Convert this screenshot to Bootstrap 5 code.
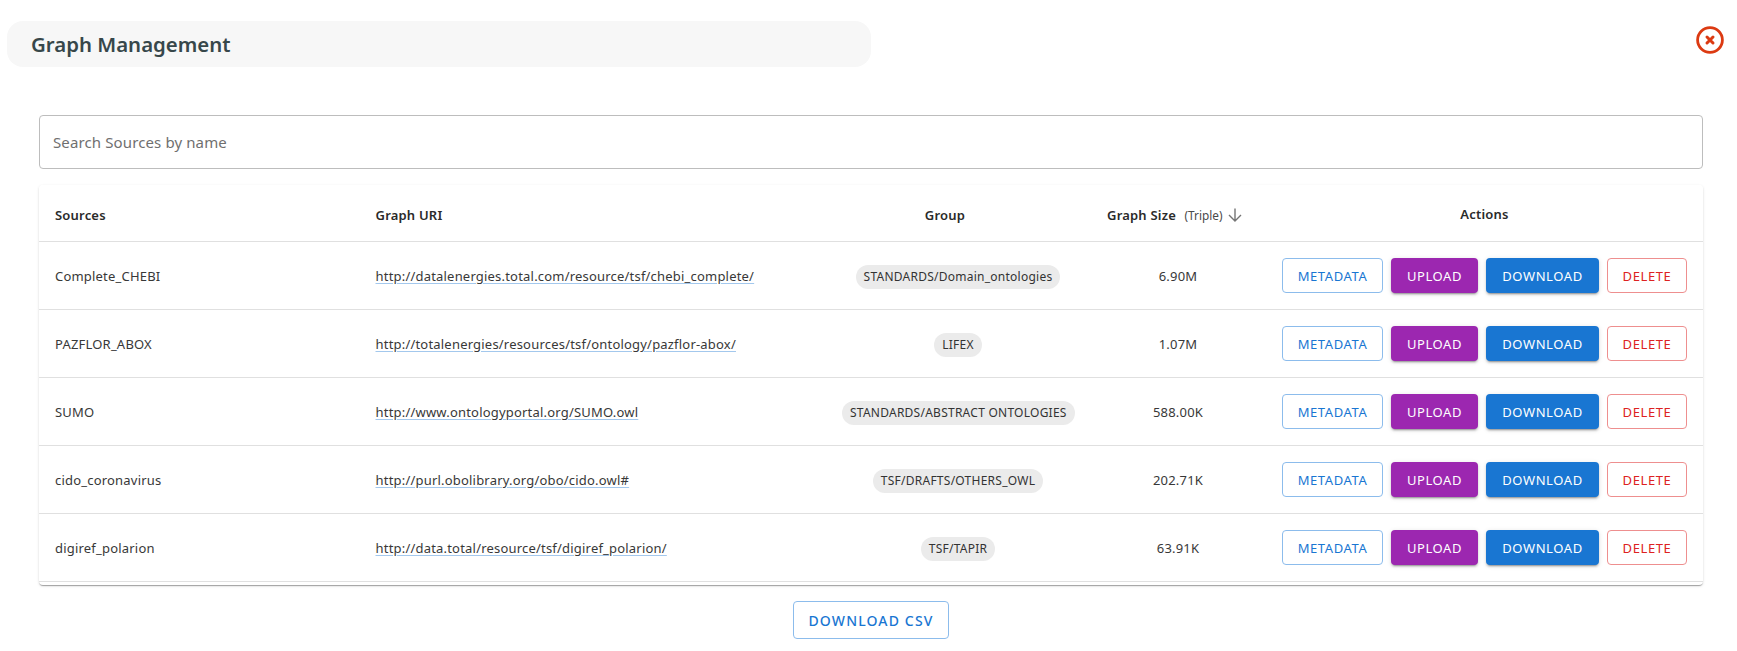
<!DOCTYPE html>
<html lang="en">
<head>
<meta charset="utf-8">
<title>Graph Management</title>
<link href="https://cdn.jsdelivr.net/npm/bootstrap@5.3.0/dist/css/bootstrap.min.css" rel="stylesheet">
<style>
html,body{background:#fff;font-family:"Noto Sans",sans-serif;color:#383838;}
.gm-page{height:651px;overflow:hidden;padding:21px 13px 0 7px;}
.gm-head{height:46px;}
.gm-title{width:864px;height:46px;background:#f7f7f7;border-radius:16px;padding:0 0 0 24px;font-size:20.4px;font-weight:600;color:#37474a;margin:0;line-height:46px;}
.gm-close{margin-top:5px;}
.gm-body{padding:48px 21px 0 32px;}
.gm-search{height:54px;border:1px solid #bdbdbd;border-radius:4px;padding:0 13px;font-size:15px;letter-spacing:.12px;color:#333;box-shadow:none;}
.gm-search::placeholder{color:#6f6f6f;opacity:1;}
.gm-card{margin-top:16px;border-radius:4px;box-shadow:0 2px 1px -1px rgba(0,0,0,.2),0 1px 1px 0 rgba(0,0,0,.14),0 1px 3px 0 rgba(0,0,0,.12);height:400px;overflow:hidden;}
.gm-table{table-layout:fixed;width:100%;margin:0;font-size:13px;letter-spacing:.2px;color:#383838;}
.gm-table th,.gm-table td{border-bottom:1px solid #e0e0e0;padding:0 16px;vertical-align:middle;background:#fff;color:#383838;}
.gm-table thead tr{height:56px;}
.gm-table tbody tr{height:68px;}
.gm-table th{font-weight:600;font-size:13px;color:#2a2a2a;padding-top:6px;}
.gm-table th.gm-actions{padding-top:4px;}
.gm-table th.gm-size{padding-left:17px;}
.gm-table td.gm-txt{padding-top:3px;}
.gm-table td.gm-chipcell{padding-left:42px;padding-right:16px;padding-top:3px;}
.gm-uri{color:#383838;text-decoration:underline;text-decoration-color:rgba(25,118,210,.4);text-underline-offset:2px;}
.gm-chip{display:inline-block;height:24px;line-height:24px;border-radius:12px;background:#ebebeb;padding:0 8px;font-size:12px;letter-spacing:.25px;color:#333;white-space:nowrap;}
.gm-triple{font-size:11.8px;font-weight:400;color:#4a4a4a;margin-left:5px;letter-spacing:0;}
.gm-arrow{margin-left:5px;vertical-align:-3px;}
.gm-btn{height:35px;font-size:13px;font-weight:400;line-height:1;letter-spacing:.6px;padding:2px 0 0;border-radius:4px;display:flex;align-items:center;justify-content:center;}
.gm-meta{width:101px;background:#fff;border:1px solid #8cbcec;color:#1976d2;}
.gm-up{width:87px;background:#9c27b0;border:0;color:#fff;box-shadow:0 3px 1px -2px rgba(0,0,0,.2),0 2px 2px 0 rgba(0,0,0,.14),0 1px 5px 0 rgba(0,0,0,.12);}
.gm-down{width:113px;background:#1976d2;border:0;color:#fff;box-shadow:0 3px 1px -2px rgba(0,0,0,.2),0 2px 2px 0 rgba(0,0,0,.14),0 1px 5px 0 rgba(0,0,0,.12);}
.gm-del{width:80px;background:#fff;border:1px solid #ee8f8f;color:#dd2222;}
.gm-csv{width:156px;height:38px;margin-top:16px;background:#fff;border:1px solid #8cbcec;color:#1976d2;font-size:14px;font-weight:500;letter-spacing:1.15px;border-radius:4px;padding:0;}
.gm-gap{gap:8px;}
</style>
</head>
<body>
<div class="gm-page">
  <div class="gm-head d-flex justify-content-between align-items-start">
    <h1 class="gm-title">Graph Management</h1>
    <svg class="gm-close" width="28" height="28" viewBox="0 0 28 28" aria-label="Close">
      <circle cx="14" cy="14" r="12.4" fill="none" stroke="#dc3a12" stroke-width="2.8"/>
      <path d="M11 11l6 6M17 11l-6 6" stroke="#dc3a12" stroke-width="3" stroke-linecap="round" fill="none"/>
    </svg>
  </div>
  <div class="gm-body">
    <input class="form-control gm-search" type="text" placeholder="Search Sources by name">
    <div class="gm-card bg-white">
      <table class="table gm-table">
        <colgroup><col style="width:320.5px"><col style="width:440.5px"><col style="width:290px"><col style="width:176px"><col></colgroup>
        <thead>
          <tr>
            <th>Sources</th>
            <th>Graph URI</th>
            <th class="text-center">Group</th>
            <th class="text-nowrap gm-size">Graph Size <span class="gm-triple">(Triple)</span><svg class="gm-arrow" width="16" height="16" viewBox="0 0 16 16"><path d="M8 1.5v12.5M2 8l6 6 6-6" fill="none" stroke="#757575" stroke-width="1.4"/></svg></th>
            <th class="text-center gm-actions">Actions</th>
          </tr>
        </thead>
        <tbody>
          <tr>
            <td class="gm-txt">Complete_CHEBI</td>
            <td class="gm-txt"><a class="gm-uri" href="#">http://datalenergies.total.com/resource/tsf/chebi_complete/</a></td>
            <td class="text-center gm-chipcell"><span class="gm-chip">STANDARDS/Domain_ontologies</span></td>
            <td class="text-center gm-txt">6.90M</td>
            <td><div class="d-flex justify-content-center gm-gap"><button class="btn gm-btn gm-meta">METADATA</button><button class="btn gm-btn gm-up">UPLOAD</button><button class="btn gm-btn gm-down">DOWNLOAD</button><button class="btn gm-btn gm-del">DELETE</button></div></td>
          </tr>
          <tr>
            <td class="gm-txt">PAZFLOR_ABOX</td>
            <td class="gm-txt"><a class="gm-uri" href="#">http://totalenergies/resources/tsf/ontology/pazflor-abox/</a></td>
            <td class="text-center gm-chipcell"><span class="gm-chip">LIFEX</span></td>
            <td class="text-center gm-txt">1.07M</td>
            <td><div class="d-flex justify-content-center gm-gap"><button class="btn gm-btn gm-meta">METADATA</button><button class="btn gm-btn gm-up">UPLOAD</button><button class="btn gm-btn gm-down">DOWNLOAD</button><button class="btn gm-btn gm-del">DELETE</button></div></td>
          </tr>
          <tr>
            <td class="gm-txt">SUMO</td>
            <td class="gm-txt"><a class="gm-uri" href="#">http://www.ontologyportal.org/SUMO.owl</a></td>
            <td class="text-center gm-chipcell"><span class="gm-chip">STANDARDS/ABSTRACT ONTOLOGIES</span></td>
            <td class="text-center gm-txt">588.00K</td>
            <td><div class="d-flex justify-content-center gm-gap"><button class="btn gm-btn gm-meta">METADATA</button><button class="btn gm-btn gm-up">UPLOAD</button><button class="btn gm-btn gm-down">DOWNLOAD</button><button class="btn gm-btn gm-del">DELETE</button></div></td>
          </tr>
          <tr>
            <td class="gm-txt">cido_coronavirus</td>
            <td class="gm-txt"><a class="gm-uri" href="#">http://purl.obolibrary.org/obo/cido.owl#</a></td>
            <td class="text-center gm-chipcell"><span class="gm-chip">TSF/DRAFTS/OTHERS_OWL</span></td>
            <td class="text-center gm-txt">202.71K</td>
            <td><div class="d-flex justify-content-center gm-gap"><button class="btn gm-btn gm-meta">METADATA</button><button class="btn gm-btn gm-up">UPLOAD</button><button class="btn gm-btn gm-down">DOWNLOAD</button><button class="btn gm-btn gm-del">DELETE</button></div></td>
          </tr>
          <tr>
            <td class="gm-txt">digiref_polarion</td>
            <td class="gm-txt"><a class="gm-uri" href="#">http://data.total/resource/tsf/digiref_polarion/</a></td>
            <td class="text-center gm-chipcell"><span class="gm-chip">TSF/TAPIR</span></td>
            <td class="text-center gm-txt">63.91K</td>
            <td><div class="d-flex justify-content-center gm-gap"><button class="btn gm-btn gm-meta">METADATA</button><button class="btn gm-btn gm-up">UPLOAD</button><button class="btn gm-btn gm-down">DOWNLOAD</button><button class="btn gm-btn gm-del">DELETE</button></div></td>
          </tr>
        </tbody>
      </table>
    </div>
    <div class="d-flex justify-content-center"><button class="btn gm-csv">DOWNLOAD CSV</button></div>
  </div>
</div>
<script src="https://cdn.jsdelivr.net/npm/bootstrap@5.3.0/dist/js/bootstrap.bundle.min.js"></script>
</body>
</html>
